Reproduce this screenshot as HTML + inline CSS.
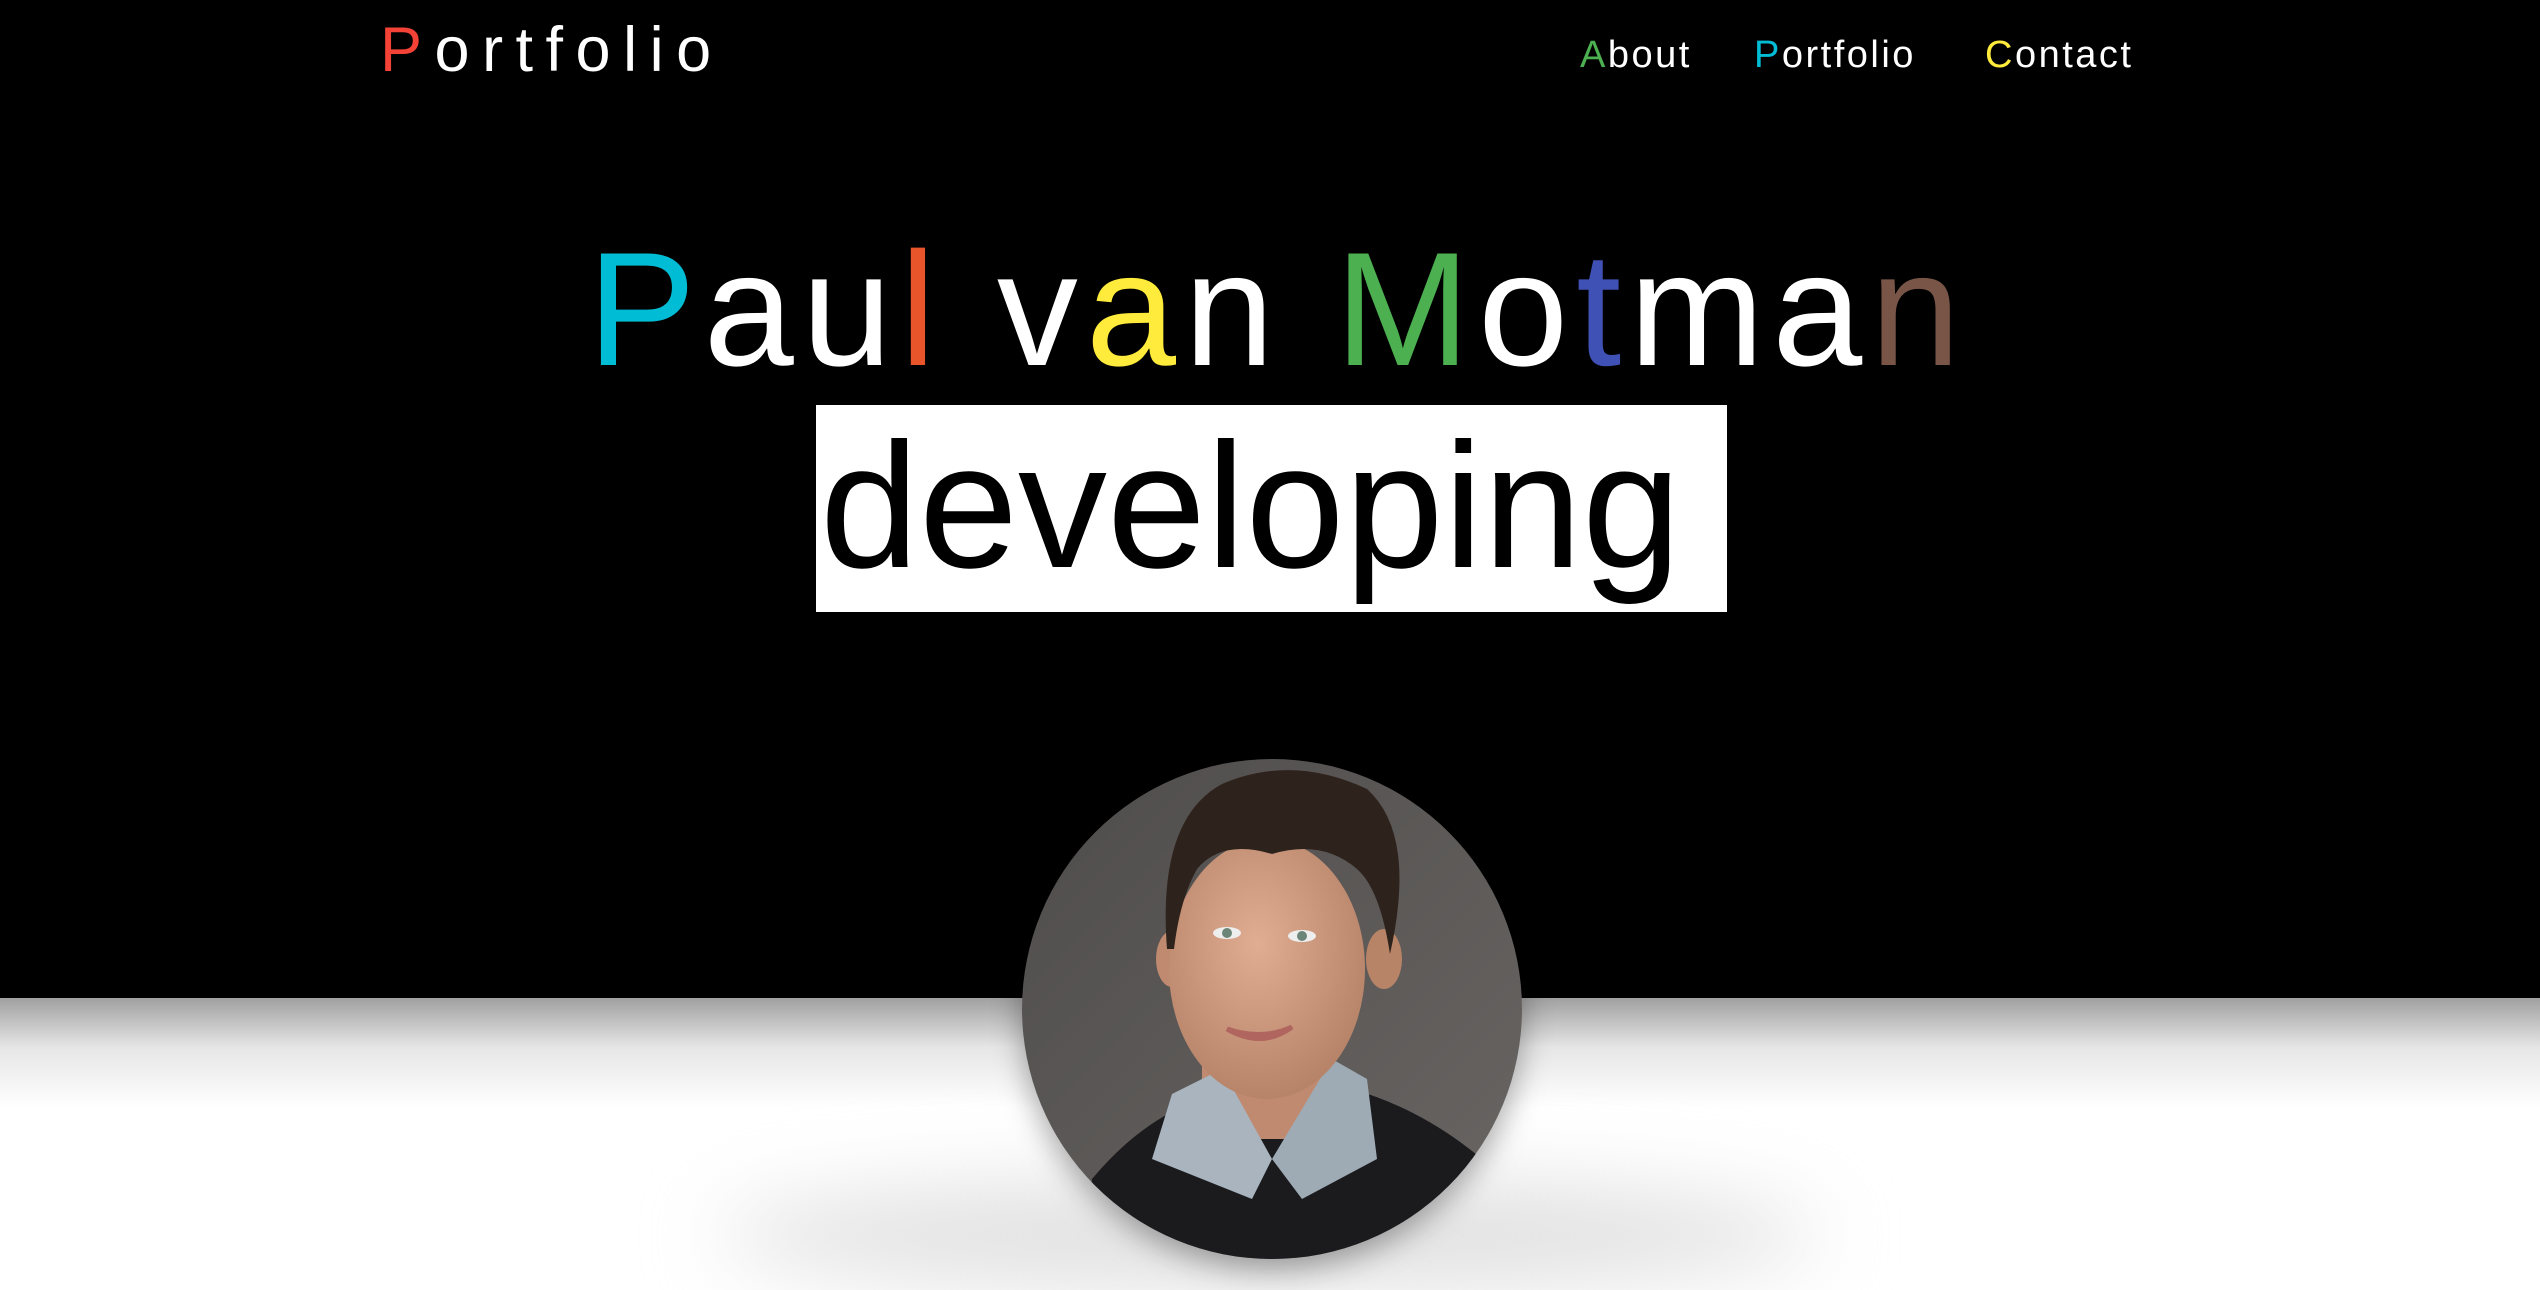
<!DOCTYPE html>
<html><head><meta charset="utf-8">
<style>
html,body{margin:0;padding:0;width:2540px;height:1210px;overflow:hidden;background:#fff;font-family:"Liberation Sans",sans-serif;}
.hero{position:absolute;left:0;top:0;width:2540px;height:998px;background:#000;}
.shadow{position:absolute;left:0;top:998px;width:2540px;height:110px;background:linear-gradient(#a0a0a0,#e6e6e6 45%,#fff);}
.bshadow{position:absolute;left:720px;top:1180px;width:1100px;height:110px;border-radius:50%;background:#e0e0e0;filter:blur(40px);}
.logo{position:absolute;left:380px;top:14px;font-size:63px;letter-spacing:12.5px;color:#fff;font-weight:300;}
.nav{position:absolute;top:34px;font-size:38px;color:#fff;letter-spacing:2.5px;}
.name{position:absolute;left:8px;width:2540px;text-align:center;top:213px;font-size:162px;letter-spacing:8px;color:#fff;font-weight:300;line-height:1.2;}
.box{position:absolute;left:816px;top:405px;width:911px;height:207px;background:#fff;}
.dev{position:absolute;left:820px;top:399px;font-size:178px;color:#000;line-height:1.2;}
.photo{position:absolute;left:1022px;top:759px;width:500px;height:500px;border-radius:50%;overflow:hidden;box-shadow:0 10px 30px rgba(0,0,0,.35);}
</style></head><body>
<div class="hero"></div>
<div class="shadow"></div>
<div class="bshadow"></div>
<div class="logo"><span style="color:#f44336">P</span>ortfolio</div>
<div class="nav" style="left:1580px"><span style="color:#4caf50">A</span>bout</div>
<div class="nav" style="left:1754px"><span style="color:#00bcd4">P</span>ortfolio</div>
<div class="nav" style="left:1985px"><span style="color:#ffeb3b">C</span>ontact</div>
<div class="name"><span style="color:#00bcd4">P</span>au<span style="color:#e8552b">l</span> v<span style="color:#ffeb3b">a</span>n <span style="color:#4caf50">M</span>o<span style="color:#3f51b5">t</span>ma<span style="color:#795548">n</span></div>
<div class="box"></div>
<div class="dev">developing</div>
<div class="photo">
<svg width="500" height="500" viewBox="0 0 500 500">
<defs><linearGradient id="bg" x1="0" y1="0" x2="1" y2="1"><stop offset="0" stop-color="#4e4c4b"/><stop offset="1" stop-color="#6a6664"/></linearGradient>
<radialGradient id="sk" cx="0.45" cy="0.4" r="0.7"><stop offset="0" stop-color="#e0ad92"/><stop offset="1" stop-color="#b07d62"/></radialGradient></defs>
<rect width="500" height="500" fill="url(#bg)"/>
<path d="M60 500 L70 420 Q120 360 180 340 L330 330 Q400 350 460 400 L470 500 Z" fill="#1b1b1e"/>
<rect x="180" y="260" width="130" height="120" fill="#c08a70"/>
<path d="M130 400 L150 335 L200 310 L250 400 L230 440 Z" fill="#a9b4be"/>
<path d="M355 400 L345 320 L310 300 L250 400 L280 440 Z" fill="#9eaab4"/>
<ellipse cx="150" cy="200" rx="16" ry="28" fill="#c08a70"/>
<ellipse cx="362" cy="200" rx="18" ry="30" fill="#b88468"/>
<ellipse cx="245" cy="210" rx="98" ry="130" fill="url(#sk)"/>
<path d="M145 190 Q135 60 200 25 Q270 -5 345 30 Q395 75 368 195 Q358 130 335 110 Q300 80 250 95 Q200 80 175 110 Q158 140 152 190 Z" fill="#2e221c"/>
<ellipse cx="205" cy="174" rx="14" ry="6" fill="#eee"/><circle cx="205" cy="174" r="5" fill="#6c8578"/>
<ellipse cx="280" cy="177" rx="14" ry="6" fill="#eee"/><circle cx="280" cy="177" r="5" fill="#6c8578"/>
<path d="M205 270 Q240 290 270 268 Q240 282 205 270Z" fill="#fff" stroke="#b0665e" stroke-width="5"/>
</svg>
</div>
</body></html>
